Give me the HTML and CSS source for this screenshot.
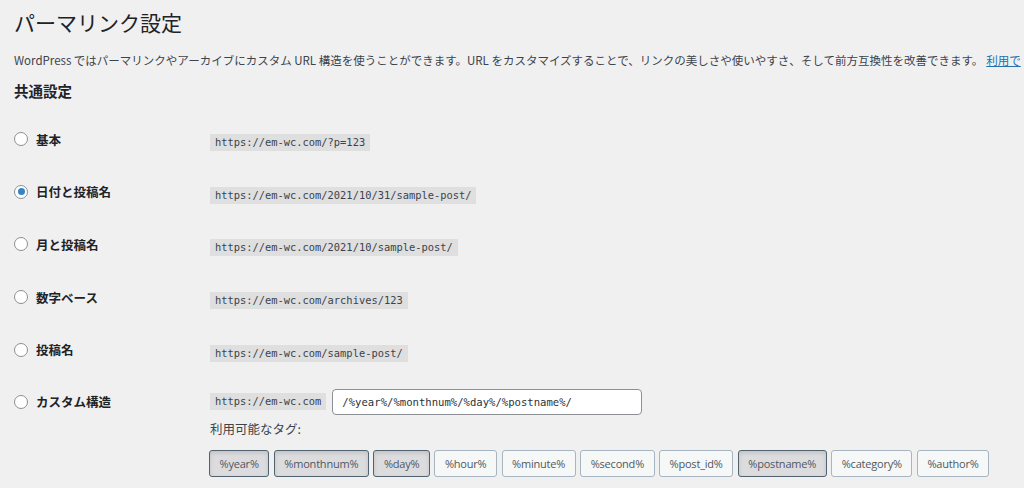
FILE: index.html
```html
<!DOCTYPE html>
<html lang="ja">
<head>
<meta charset="utf-8">
<title>パーマリンク設定</title>
<link rel="stylesheet" href="styles.css">
</head>
<body>
<div class="wrap">
  <h1 class="title">パーマリンク設定</h1>
  <p class="desc">WordPress ではパーマリンクやアーカイブにカスタム URL 構造を使うことができます。URL をカスタマイズすることで、リンクの美しさや使いやすさ、そして前方互換性を改善できます。<a href="#">利用で</a></p>
  <h2 class="section">共通設定</h2>
  <div class="rows">
    <div class="row">
      <label class="opt"><span class="radio"></span>基本</label>
      <div class="val"><code class="code">https://em-wc.com/?p=123</code></div>
    </div>
    <div class="row">
      <label class="opt"><span class="radio checked"></span>日付と投稿名</label>
      <div class="val"><code class="code">https://em-wc.com/2021/10/31/sample-post/</code></div>
    </div>
    <div class="row">
      <label class="opt"><span class="radio"></span>月と投稿名</label>
      <div class="val"><code class="code">https://em-wc.com/2021/10/sample-post/</code></div>
    </div>
    <div class="row">
      <label class="opt"><span class="radio"></span>数字ベース</label>
      <div class="val"><code class="code">https://em-wc.com/archives/123</code></div>
    </div>
    <div class="row">
      <label class="opt"><span class="radio"></span>投稿名</label>
      <div class="val"><code class="code">https://em-wc.com/sample-post/</code></div>
    </div>
    <div class="row custom">
      <label class="opt"><span class="radio"></span>カスタム構造</label>
      <div class="val">
        <div class="custom-line">
          <code class="code">https://em-wc.com</code>
          <div class="input">/%year%/%monthnum%/%day%/%postname%/</div>
        </div>
        <div class="tags-label">利用可能なタグ:</div>
        <div class="tags">
          <span class="tag active">%year%</span>
          <span class="tag active">%monthnum%</span>
          <span class="tag active">%day%</span>
          <span class="tag">%hour%</span>
          <span class="tag">%minute%</span>
          <span class="tag">%second%</span>
          <span class="tag">%post_id%</span>
          <span class="tag active">%postname%</span>
          <span class="tag">%category%</span>
          <span class="tag">%author%</span>
        </div>
      </div>
    </div>
  </div>
</div>
</body>
</html>
```
FILE: styles.css
```css
html, body {
  margin: 0;
  padding: 0;
  background: #f0f0f1;
  overflow: hidden;
}
body {
  width: 1024px;
  height: 488px;
  font-family: "Noto Sans CJK JP", "Noto Sans", sans-serif;
  color: #1d2327;
}
.wrap {
  padding-left: 14px;
}
.title {
  margin: 0;
  padding-top: 7px;
  font-size: 21px;
  line-height: 30px;
  font-weight: 400;
  color: #1d2327;
}
.desc {
  margin: 14px 0 0;
  font-size: 11.5px;
  line-height: 18px;
  color: #3c434a;
  white-space: nowrap;
}
.desc a {
  color: #2271b1;
  text-decoration: underline;
  margin-left: 3px;
}
.section {
  margin: 12px 0 0;
  font-size: 14.5px;
  line-height: 20px;
  font-weight: 700;
  color: #1d2327;
}
.rows {
  margin-top: 12px;
}
.row {
  display: grid;
  grid-template-columns: 196px 1fr;
  height: 52.6px;
  align-items: center;
}
.row.custom {
  height: auto;
  align-items: start;
  padding-top: 13px;
}
.opt {
  display: flex;
  align-items: center;
  gap: 8px;
  font-size: 12.5px;
  font-weight: 700;
  color: #1d2327;
}
.row.custom .opt {
  height: 26px;
}
.radio {
  box-sizing: border-box;
  width: 14px;
  height: 14px;
  border: 1px solid #8c8f94;
  border-radius: 50%;
  background: #fff;
  display: flex;
  align-items: center;
  justify-content: center;
}
.radio.checked::after {
  content: "";
  width: 7px;
  height: 7px;
  border-radius: 50%;
  background: #3582c4;
}
.code {
  display: inline-block;
  background: rgba(0,0,0,0.07);
  padding: 1px 5px 2px;
  font-family: "DejaVu Sans Mono", "Liberation Mono", monospace;
  font-size: 10.4px;
  line-height: 14px;
  color: #3c434a;
}
.custom-line {
  display: flex;
  align-items: center;
  gap: 6px;
}
.input {
  box-sizing: border-box;
  width: 310px;
  height: 26px;
  background: #fff;
  border: 1px solid #8c8f94;
  border-radius: 4px;
  padding: 0 9px;
  display: flex;
  align-items: center;
  font-family: "DejaVu Sans Mono", "Liberation Mono", monospace;
  font-size: 10.6px;
  color: #2c3338;
}
.tags-label {
  margin-top: 5px;
  font-size: 12.5px;
  line-height: 18px;
  color: #3c434a;
}
.tags {
  display: flex;
  gap: 4.5px;
  margin-top: 12px;
  margin-left: -1px;
}
.tag {
  box-sizing: border-box;
  height: 27px;
  padding: 0 9.5px;
  display: flex;
  align-items: center;
  border: 1px solid #a7b4c1;
  border-radius: 3px;
  background: #f6f7f7;
  font-family: "Open Sans", "Noto Sans", sans-serif;
  font-size: 11px;
  color: #50575e;
  letter-spacing: -0.2px;
}
.tag.active {
  background: #dcdcde;
  border-color: #50626f;
  box-shadow: inset 0 2px 4px rgba(0,0,0,0.12);
}
```
